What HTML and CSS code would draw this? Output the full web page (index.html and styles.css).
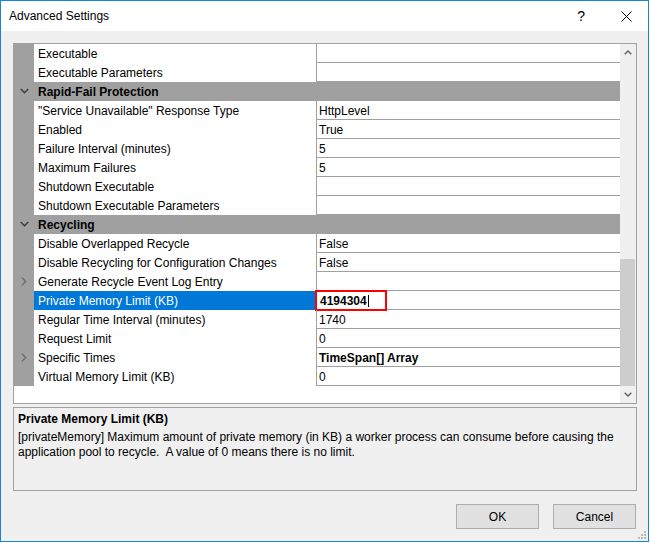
FILE: index.html
```html
<!DOCTYPE html>
<html>
<head>
<meta charset="utf-8">
<title>Advanced Settings</title>
<link rel="stylesheet" href="styles.css">
</head>
<body>
<div class="window">
  <div class="titlebar">
    <span class="title">Advanced Settings</span>
    <span class="help">?</span>
    <span class="close"><svg width="11" height="11" viewBox="0 0 11 11"><path d="M0.5 0.5 L10.5 10.5 M10.5 0.5 L0.5 10.5" stroke="#000" stroke-width="1" fill="none"/></svg></span>
  </div>
  <div class="client">
    <div class="grid">
      <div class="rows">
        <div class="row"><div class="gut"></div><div class="name">Executable</div><div class="val"></div></div>
        <div class="row"><div class="gut"></div><div class="name">Executable Parameters</div><div class="val"></div></div>
        <div class="row cat"><div class="gut"><svg width="9" height="6" viewBox="0 0 9 6"><polyline points="0.8,1 4.5,4.7 8.2,1" fill="none" stroke="#3a3a3a" stroke-width="1.4"/></svg></div><div class="cat-label">Rapid-Fail Protection</div></div>
        <div class="row"><div class="gut"></div><div class="name">"Service Unavailable" Response Type</div><div class="val">HttpLevel</div></div>
        <div class="row"><div class="gut"></div><div class="name">Enabled</div><div class="val">True</div></div>
        <div class="row"><div class="gut"></div><div class="name">Failure Interval (minutes)</div><div class="val">5</div></div>
        <div class="row"><div class="gut"></div><div class="name">Maximum Failures</div><div class="val">5</div></div>
        <div class="row"><div class="gut"></div><div class="name">Shutdown Executable</div><div class="val"></div></div>
        <div class="row"><div class="gut"></div><div class="name">Shutdown Executable Parameters</div><div class="val"></div></div>
        <div class="row cat"><div class="gut"><svg width="9" height="6" viewBox="0 0 9 6"><polyline points="0.8,1 4.5,4.7 8.2,1" fill="none" stroke="#3a3a3a" stroke-width="1.4"/></svg></div><div class="cat-label">Recycling</div></div>
        <div class="row"><div class="gut"></div><div class="name">Disable Overlapped Recycle</div><div class="val">False</div></div>
        <div class="row"><div class="gut"></div><div class="name">Disable Recycling for Configuration Changes</div><div class="val">False</div></div>
        <div class="row"><div class="gut"><svg width="6" height="9" viewBox="0 0 6 9"><polyline points="1,0.8 4.7,4.5 1,8.2" fill="none" stroke="#6e6e6e" stroke-width="1.4"/></svg></div><div class="name">Generate Recycle Event Log Entry</div><div class="val"></div></div>
        <div class="row sel"><div class="gut"></div><div class="name">Private Memory Limit (KB)</div><div class="val"><div class="editbox"><span class="edit-text">4194304</span><span class="caret"></span></div></div></div>
        <div class="row"><div class="gut"></div><div class="name">Regular Time Interval (minutes)</div><div class="val">1740</div></div>
        <div class="row"><div class="gut"></div><div class="name">Request Limit</div><div class="val">0</div></div>
        <div class="row"><div class="gut"><svg width="6" height="9" viewBox="0 0 6 9"><polyline points="1,0.8 4.7,4.5 1,8.2" fill="none" stroke="#6e6e6e" stroke-width="1.4"/></svg></div><div class="name">Specific Times</div><div class="val bold">TimeSpan[] Array</div></div>
        <div class="row"><div class="gut"></div><div class="name">Virtual Memory Limit (KB)</div><div class="val">0</div></div>
        <div class="filler"></div>
      </div>
      <div class="vscroll">
        <div class="sb-btn"><svg width="8" height="5" viewBox="0 0 8 5"><polyline points="0.7,4.3 4,1 7.3,4.3" fill="none" stroke="#606060" stroke-width="1.4"/></svg></div>
        <div class="sb-track"><div class="thumb"></div></div>
        <div class="sb-btn"><svg width="8" height="5" viewBox="0 0 8 5"><polyline points="0.7,0.7 4,4 7.3,0.7" fill="none" stroke="#606060" stroke-width="1.4"/></svg></div>
      </div>
    </div>
    <div class="desc">
      <div class="desc-title">Private Memory Limit (KB)</div>
      <div class="desc-body">[privateMemory] Maximum amount of private memory (in KB) a worker process can consume before causing the application pool to recycle.&nbsp; A value of 0 means there is no limit.</div>
    </div>
    <div class="buttons">
      <button class="btn">OK</button>
      <button class="btn">Cancel</button>
    </div>
  </div>
  <svg class="grip" width="9" height="9" viewBox="0 0 9 9">
    <rect x="6" y="0" width="2" height="2" fill="#b8b8b8"/>
    <rect x="3" y="3" width="2" height="2" fill="#b8b8b8"/>
    <rect x="6" y="3" width="2" height="2" fill="#b8b8b8"/>
    <rect x="0" y="6" width="2" height="2" fill="#b8b8b8"/>
    <rect x="3" y="6" width="2" height="2" fill="#b8b8b8"/>
    <rect x="6" y="6" width="2" height="2" fill="#b8b8b8"/>
  </svg>
</div>
</body>
</html>
```

FILE: styles.css
```css
body {
  margin: 0;
  background: #ffffff;
  font-family: "Liberation Sans", Arial, sans-serif;
  font-size: 12px;
  color: #000000;
}

.window {
  position: relative;
  width: 649px;
  height: 542px;
  box-sizing: border-box;
  border: 1px solid #1883d7;
  background: #f0f0f0;
  display: flex;
  flex-direction: column;
}

.titlebar {
  height: 30px;
  flex: none;
  background: #ffffff;
  display: flex;
  align-items: center;
  padding: 0 16px 0 8px;
}

.title {
  flex: 1;
  white-space: nowrap;
}

.help {
  font-size: 14px;
  margin-right: 36px;
  line-height: 14px;
}

.close {
  display: flex;
  width: 11px;
  height: 11px;
}

.client {
  flex: 1;
  display: flex;
  flex-direction: column;
  padding: 12px 11px 0 12px;
}

.grid {
  flex: none;
  height: 361px;
  box-sizing: border-box;
  border: 1px solid #a0a0a0;
  background: #ffffff;
  display: flex;
}

.rows {
  width: 606px;
  display: flex;
  flex-direction: column;
}

.row {
  display: flex;
  height: 19px;
  flex: none;
}

.gut {
  width: 20px;
  height: 19px;
  box-sizing: border-box;
  padding-bottom: 1px;
  background: #a0a0a0;
  display: flex;
  align-items: center;
  justify-content: center;
}

.name {
  width: 282px;
  height: 19px;
  box-sizing: border-box;
  padding-left: 4px;
  padding-top: 1px;
  line-height: 18px;
  white-space: nowrap;
  overflow: hidden;
  background: #ffffff;
}

.val {
  position: relative;
  width: 304px;
  height: 19px;
  box-sizing: border-box;
  border-left: 1px solid #a0a0a0;
  border-bottom: 1px solid #a0a0a0;
  padding-left: 2px;
  padding-top: 1px;
  line-height: 18px;
  white-space: nowrap;
}

.bold {
  font-weight: bold;
}

.row.cat {
  background: #a0a0a0;
}

.cat-label {
  flex: 1;
  height: 19px;
  box-sizing: border-box;
  padding-left: 4px;
  padding-top: 1px;
  line-height: 18px;
  font-weight: bold;
  white-space: nowrap;
}

.row.sel .name {
  background: #0078d7;
  color: #ffffff;
}

.editbox {
  position: absolute;
  left: -2px;
  top: -1px;
  width: 72px;
  height: 21px;
  box-sizing: border-box;
  border: 2px solid #ff0000;
  background: #ffffff;
  padding-left: 3px;
  padding-top: 1px;
  display: flex;
  align-items: center;
  font-weight: bold;
  line-height: 16px;
}

.caret {
  display: inline-block;
  width: 1px;
  height: 12px;
  background: #000000;
  margin-left: 1px;
}

.filler {
  flex: 1;
  background: #ffffff;
}

.vscroll {
  width: 16px;
  background: #f0f0f0;
  display: flex;
  flex-direction: column;
}

.sb-btn {
  height: 17px;
  flex: none;
  display: flex;
  align-items: center;
  justify-content: center;
}

.sb-track {
  flex: 1;
}

.thumb {
  margin-top: 198px;
  width: 15px;
  height: 127px;
  background: #cdcdcd;
}

.desc {
  flex: none;
  margin-top: 3px;
  height: 84px;
  box-sizing: border-box;
  border: 1px solid #a0a0a0;
  padding: 3px 4px 0 4px;
}

.desc-title {
  font-weight: bold;
  line-height: 16px;
}

.desc-body {
  margin-top: 3px;
  line-height: 15px;
}

.buttons {
  display: flex;
  justify-content: flex-end;
  gap: 14px;
  margin-top: 13px;
  margin-right: 1px;
}

.btn {
  width: 83px;
  height: 25px;
  box-sizing: border-box;
  border: 1px solid #adadad;
  background: #e1e1e1;
  font-family: "Liberation Sans", Arial, sans-serif;
  font-size: 12px;
  color: #000000;
  padding: 0;
  margin: 0;
}

.grip {
  position: absolute;
  right: 1px;
  bottom: 1px;
}
```
